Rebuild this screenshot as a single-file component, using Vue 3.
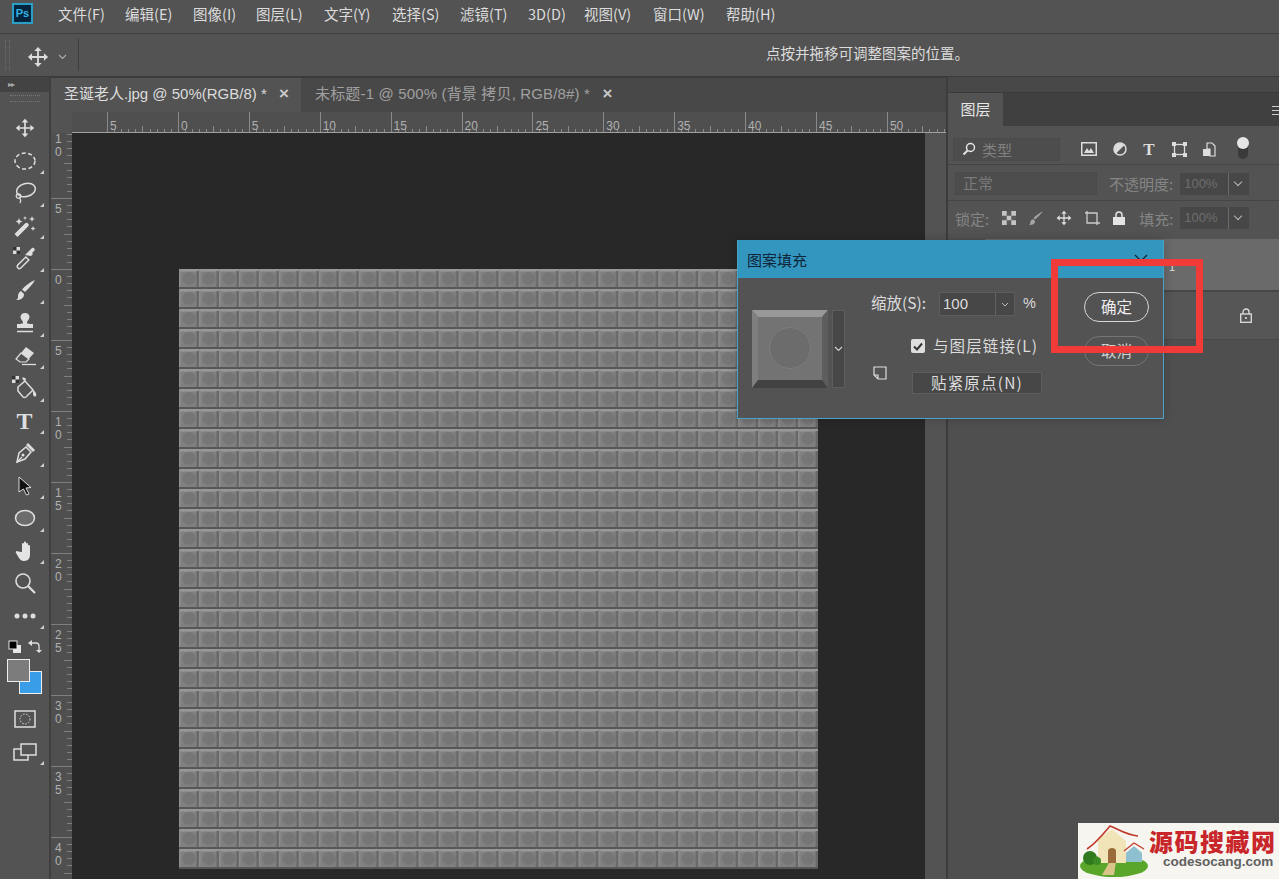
<script setup>
// Photoshop window with the pattern fill dialog open over the canvas.
const menus = [
  ['文件(F)', 67], ['编辑(E)', 68], ['图像(I)', 63], ['图层(L)', 68], ['文字(Y)', 68], ['选择(S)', 68],
  ['滤镜(T)', 68], ['3D(D)', 56], ['视图(V)', 69], ['窗口(W)', 73], ['帮助(H)', 60],
];

const STEP = 70.9;
// top ruler: first labelled tick sits 35px into the canvas area
const topLabels = ['5', '0', '5', '10', '15', '20', '25', '30', '35', '40', '45', '50'].map((t, i) => ({
  t,
  x: 35 + i * STEP,
}));
const topTicks = [];
for (let i = 0; i < 120; i++) {
  const h = i % 10 === 0 ? 21 : i % 5 === 0 ? 7 : 4;
  topTicks.push({ x: Math.round(35 + i * 7.09) + 0.5, h });
}
const leftLabels = ['5', '0', '5', '10', '15', '20', '25', '30', '35', '40'].map((t, i) => ({
  d: t.split(''),
  y: 68 + i * 71,
}));
const leftTicks = [];
for (let i = 0; i < 110; i++) {
  const w = i % 10 === 0 ? 21 : i % 5 === 0 ? 8 : 5;
  leftTicks.push({ y: Math.round(-6 + i * 7.1) + 0.5, w });
}
</script>

<template>
  <div class="ps">
    <!-- menu bar -->
    <header class="menubar">
      <div class="logo">Ps</div>
      <nav class="menus">
        <span v-for="m in menus" :key="m[0]" class="menu" :style="{ width: m[1] + 'px' }">{{ m[0] }}</span>
      </nav>
    </header>

    <!-- options bar -->
    <div class="options">
      <div class="grip"></div>
      <svg class="opt-move" width="22" height="22" viewBox="0 0 24 24"><path fill="#dcdcdc" d="M12 1l4 4.500h-3V11h5.500V8l4.500 4-4.500 4v-3H13v5.500h3L12 23l-4-4.500h3V13H5.500v3L1 12l4.500-4v3H11V5.500H8z"/></svg>
      <svg class="chev" width="9" height="6" viewBox="0 0 9 6"><path d="M1 1l3.500 3.500L8 1" fill="none" stroke="#aaa" stroke-width="1.200"/></svg>
      <div class="opt-div"></div>
      <div class="opt-hint">点按并拖移可调整图案的位置。</div>
    </div>

    <div class="work">
      <!-- tools -->
      <aside class="toolbar">
        <div class="collapse">▸▸</div>
        <div class="tool-grip"></div>
        <div class="tools">
          <div class="tool"><svg width="20" height="20" viewBox="0 0 24 24"><path fill="#dedede" d="M12 1l4 4.500h-3V11h5.500V8l4.500 4-4.500 4v-3H13v5.500h3L12 23l-4-4.500h3V13H5.500v3L1 12l4.500-4v3H11V5.500H8z"/></svg></div>
          <div class="tool more"><svg width="22" height="20" viewBox="0 0 22 20"><ellipse cx="11" cy="10" rx="10" ry="8" fill="none" stroke="#dedede" stroke-width="1.500" stroke-dasharray="4 2.500"/></svg></div>
          <div class="tool more"><svg width="22" height="24" viewBox="0 0 22 24"><ellipse cx="12" cy="9" rx="9.500" ry="6.500" transform="rotate(-15 12 9)" fill="none" stroke="#dedede" stroke-width="1.500"/><circle cx="4.500" cy="15" r="2.200" fill="none" stroke="#dedede" stroke-width="1.300"/><path d="M5 17c2 1 2 3 1 5" fill="none" stroke="#dedede" stroke-width="1.300"/></svg></div>
          <div class="tool more"><svg width="24" height="24" viewBox="0 0 24 24"><path d="M4.500 23L1.500 20 12 9.500c1-1 2-1 3 0s1 2 0 3z" fill="#dedede"/><path d="M6 4l1 2.500L9.500 7.500 7 8.500 6 11 5 8.500 2.500 7.500 5 6.500zM19 2l.8 2.200L22 5l-2.200.8L19 8l-.8-2.200L16 5l2.200-.8zM20 12l.7 1.800 1.800.7-1.800.7L20 17l-.7-1.800-1.800-.7 1.800-.7zM12 2l.6 1.400L14 4l-1.400.6L12 6l-.6-1.400L10 4l1.400-.6z" fill="#dedede"/></svg></div>
          <div class="tool more"><svg width="26" height="24" viewBox="0 0 26 24"><rect x="1" y="1" width="7" height="7" fill="#ddd"/><path d="M1 1h3.500v3.500H1zM4.500 4.500H8V8H4.500z" fill="#333"/><path d="M6 22c-1-1-1-2-.2-3l8-8 3 3-8 8c-1 .8-2 1-2.800 0z" fill="none" stroke="#dedede" stroke-width="1.500"/><path d="M13 9l7-7c1.500-1 3.500 1 2.500 2.500l-2.500 2.500 1 1-2 2-6-1z" fill="#dedede"/></svg></div>
          <div class="tool more"><svg width="22" height="24" viewBox="0 0 22 24"><path d="M21 1c-2 4-6 8-10 12l-3-2.500C11 7 16 3 21 1z" fill="#dedede"/><path d="M7 12l3 3c0 4-3 6-8 6 2-1 2-2 2-4 0-2 1-4 3-5z" fill="#dedede"/></svg></div>
          <div class="tool more"><svg width="20" height="22" viewBox="0 0 20 22"><path d="M10 1c3 0 4.500 2 4.500 4 0 2.500-2.500 3.500-2.500 5.500 0 1 1 1.500 6 1.500v4H2v-4c5 0 6-.5 6-1.500 0-2-2.500-3-2.500-5.500C5.500 3 7 1 10 1z" fill="#dedede"/><path d="M2 19.500h16" stroke="#dedede" stroke-width="1.500"/></svg></div>
          <div class="tool more"><svg width="24" height="20" viewBox="0 0 24 20"><path d="M13 1l8 6-8 9H7l-4-3z" fill="#dedede"/><path d="M3 13l5-6 8 6-3 3H7z" fill="#535353" stroke="#dedede" stroke-width="1.200"/><path d="M9 18.500h14" stroke="#dedede" stroke-width="1.300"/></svg></div>
          <div class="tool more"><svg width="28" height="26" viewBox="0 0 28 26"><rect x="1" y="1" width="7" height="7" fill="#ddd"/><path d="M1 1h3.500v3.500H1zM4.500 4.500H8V8H4.500z" fill="#333"/><path d="M7 12l7-6 8 9-7 7c-1 .7-2 .7-3 0l-5-6z" fill="none" stroke="#dedede" stroke-width="1.500"/><path d="M11 3c2-1 4 0 4 2l-2 1z" fill="#dedede"/><path d="M22 15c2 1 4 4 3 6-1 1.500-3 0-3-2z" fill="#dedede"/></svg></div>
          <div class="tool more type">T</div>
          <div class="tool more"><svg width="22" height="22" viewBox="0 0 22 22"><path d="M3 20l2-9 7-6 5 5-6 7z" fill="none" stroke="#dedede" stroke-width="1.500"/><path d="M12 3l2-2 7 7-2 2z" fill="#dedede"/><path d="M3 20l5-5" stroke="#dedede" stroke-width="1.200"/><circle cx="9" cy="13" r="1.500" fill="#dedede"/></svg></div>
          <div class="tool more"><svg width="16" height="20" viewBox="0 0 16 20"><path d="M2 1l12 10.500-5 .5 3 6-2.500 1-3-6L2 16z" fill="#111" stroke="#dedede" stroke-width="1"/></svg></div>
          <div class="tool more"><svg width="22" height="18" viewBox="0 0 22 18"><ellipse cx="11" cy="9" rx="9.500" ry="7.500" fill="#6c6c6c" stroke="#dedede" stroke-width="1.500"/></svg></div>
          <div class="tool more"><svg width="20" height="22" viewBox="0 0 20 22"><path d="M7 12V4c0-1.500 2-1.500 2 0V2.500c0-1.500 2-1.500 2 0V4c0-1.500 2-1.500 2 0v2c0-1.500 2-1.500 2 0v9c0 3-2 6-6 6-3 0-4-2-5-3L1 13c-1-1.500 1-2.500 2-1.500z" fill="#e4e4e4"/></svg></div>
          <div class="tool"><svg width="22" height="22" viewBox="0 0 22 22"><circle cx="9" cy="9" r="7" fill="none" stroke="#dedede" stroke-width="1.600"/><path d="M14 14l7 7" stroke="#dedede" stroke-width="2.200"/></svg></div>
          <div class="tool more"><svg width="22" height="6" viewBox="0 0 22 6"><circle cx="3" cy="3" r="2.500" fill="#dedede"/><circle cx="11" cy="3" r="2.500" fill="#dedede"/><circle cx="19" cy="3" r="2.500" fill="#dedede"/></svg></div>
        </div>
        <div class="mini-colors">
          <svg width="14" height="14" viewBox="0 0 14 14"><rect x="5" y="5" width="8" height="8" fill="#e6e6e6"/><rect x="1" y="1" width="8" height="8" fill="#000" stroke="#e6e6e6"/></svg>
          <svg width="14" height="14" viewBox="0 0 14 14"><path d="M1 3h7a3 3 0 0 1 3 3v5" fill="none" stroke="#dedede" stroke-width="1.300"/><path d="M4 0v6L0 3zM8 10h6l-3 3z" fill="#dedede"/></svg>
        </div>
        <div class="swatches">
          <div class="sw-bg"></div>
          <div class="sw-fg"></div>
        </div>
        <div class="tool mask"><svg width="22" height="18" viewBox="0 0 22 18"><rect x="1" y="1" width="20" height="16" fill="none" stroke="#dedede" stroke-width="1.500"/><circle cx="11" cy="9" r="5" fill="none" stroke="#dedede" stroke-dasharray="1.500 1.500"/></svg></div>
        <div class="tool more"><svg width="24" height="18" viewBox="0 0 24 18"><rect x="1" y="6" width="14" height="11" fill="none" stroke="#dedede" stroke-width="1.500"/><rect x="8" y="1" width="15" height="11" fill="#535353" stroke="#dedede" stroke-width="1.500"/></svg></div>
      </aside>

      <!-- document -->
      <main class="doc">
        <div class="tabs">
          <div class="tab active">圣诞老人.jpg @ 50%(RGB/8) * <span class="x">×</span></div>
          <div class="tab second">未标题-1 @ 500% (背景 拷贝, RGB/8#) * <span class="x">×</span></div>
        </div>
        <div class="viewport">
          <svg class="ruler-top" width="874" height="21">
            <rect width="874" height="21" fill="#4f4f4f"/>
            <path v-for="k in topTicks" :key="k.x" :d="`M${k.x} ${21 - k.h}V21`" stroke="#8a8a8a"/>
            <text v-for="l in topLabels" :key="l.x" :x="l.x + 3" y="18" class="rt">{{ l.t }}</text>
            <path d="M0 20.500H874" stroke="#a0a0a0"/>
          </svg>
          <div class="view-row">
            <svg class="ruler-left" width="21" height="746">
              <rect width="21" height="746" fill="#4f4f4f"/>
              <path v-for="k in leftTicks" :key="k.y" :d="`M${21 - k.w} ${k.y}H21`" stroke="#7e7e7e"/>
              <g v-for="l in leftLabels" :key="l.y">
                <text v-for="(c, i) in l.d" :key="i" x="4" :y="l.y + 12 + i * 13" class="rt">{{ c }}</text>
              </g>
              <text x="4" y="10" class="rt">1</text>
              <text x="4" y="23" class="rt">0</text>
            </svg>
            <div class="canvas">
              <svg class="pattern" width="639" height="600">
                <defs>
                  <pattern id="tile" width="19.970" height="20" patternUnits="userSpaceOnUse">
                    <rect width="20" height="20" fill="#808080"/>
                    <circle cx="10" cy="9.500" r="6.500" fill="#767676"/>
                    <path d="M0 0h20v2.500H0z" fill="#989898"/>
                    <path d="M0 0h1.500v18H0z" fill="#8e8e8e"/>
                    <path d="M17.500 2h2.500v16h-2.500z" fill="#686868"/>
                    <path d="M0 18h20v2H0z" fill="#575757"/>
                  </pattern>
                </defs>
                <rect width="639" height="600" fill="url(#tile)"/>
              </svg>
            </div>
            <div class="vscroll"></div>
          </div>
        </div>
      </main>

      <!-- layers panel -->
      <aside class="panel">
        <div class="panel-tabs">
          <div class="panel-tab">图层</div>
          <div class="panel-menu"></div>
        </div>
        <div class="p-row filter">
          <div class="select kind">
            <svg width="14" height="14" viewBox="0 0 14 14"><circle cx="8.500" cy="5.500" r="4" fill="none" stroke="#e4e4e4" stroke-width="1.500"/><path d="M5.500 8.500L1.500 12.500" stroke="#e4e4e4" stroke-width="2"/></svg>
            <span>类型</span>
          </div>
          <div class="filter-icons">
            <svg width="16" height="14" viewBox="0 0 16 14"><rect x=".75" y=".75" width="14.500" height="12.500" fill="none" stroke="#ddd" stroke-width="1.500"/><path d="M3 11l3-5 2 3 2-3 3 5z" fill="#ddd"/></svg>
            <svg width="14" height="14" viewBox="0 0 14 14"><circle cx="7" cy="7" r="6" fill="none" stroke="#ddd" stroke-width="1.500"/><path d="M11.500 3L3 11.500A6 6 0 0 1 11.500 3z" fill="#ddd"/></svg>
            <span class="t-icon">T</span>
            <svg width="15" height="15" viewBox="0 0 15 15"><rect x="2.500" y="2.500" width="10" height="10" fill="none" stroke="#ddd" stroke-width="1.300"/><path d="M0 0h4v4H0zM11 0h4v4h-4zM0 11h4v4H0zM11 11h4v4h-4z" fill="#ddd"/></svg>
            <svg width="14" height="15" viewBox="0 0 14 15"><path d="M5 1h5l3 3v10H8V7H5z" fill="none" stroke="#ddd" stroke-width="1.200"/><rect x="1" y="7" width="7" height="7" fill="#ddd"/></svg>
            <div class="toggle"></div>
          </div>
        </div>
        <div class="p-row blend">
          <div class="select mode">正常</div>
          <span class="dim">不透明度:</span>
          <div class="num">100%<i></i></div>
        </div>
        <div class="p-row locks">
          <span class="dim">锁定:</span>
          <div class="lock-icons">
            <svg width="14" height="14" viewBox="0 0 14 14"><rect width="14" height="14" fill="#5a5a5a"/><path d="M0 0h4.700v4.700H0zM9.300 0H14v4.700H9.300zM4.700 4.700h4.600v4.600H4.700zM0 9.300h4.700V14H0zM9.300 9.300H14V14H9.300z" fill="#c4c4c4"/></svg>
            <svg width="16" height="16" viewBox="0 0 16 16"><path d="M15 1c-2 3-5 6-8 8.500L5.500 8C8 5.500 12 2.500 15 1zM5 9l2 2c0 3-2 4-6 4 1.500-1 1-2 1.500-3.500C3 10 4 9.500 5 9z" fill="#a5a5a5"/></svg>
            <svg width="16" height="16" viewBox="0 0 24 24"><path fill="#ddd" d="M12 1l4 4.500h-3V11h5.500V8l4.500 4-4.500 4v-3H13v5.500h3L12 23l-4-4.500h3V13H5.500v3L1 12l4.500-4v3H11V5.500H8z"/></svg>
            <svg width="17" height="16" viewBox="0 0 17 16"><path d="M3 1v12h13M1 3h12v12" fill="none" stroke="#ccc" stroke-width="1.300"/></svg>
            <svg width="12" height="14" viewBox="0 0 12 14"><path d="M3 6V4a3 3 0 0 1 6 0v2" fill="none" stroke="#e4e4e4" stroke-width="1.500"/><rect y="6" width="12" height="8" fill="#e4e4e4"/></svg>
          </div>
          <span class="dim fill">填充:</span>
          <div class="num">100%<i></i></div>
        </div>
        <div class="layers">
          <div class="layer on"><span>1</span></div>
          <div class="layer plain">
            <svg width="12" height="15" viewBox="0 0 12 15"><path d="M3 6V4a3 3 0 0 1 6 0v2" fill="none" stroke="#ddd" stroke-width="1.300"/><rect x=".7" y="6" width="10.600" height="8.300" fill="none" stroke="#ddd" stroke-width="1.300"/><circle cx="6" cy="10" r="1.100" fill="#ddd"/></svg>
          </div>
        </div>
      </aside>
    </div>

    <!-- pattern fill dialog -->
    <section class="dialog">
      <div class="d-title">图案填充<svg width="14" height="10" viewBox="0 0 14 10"><path d="M1 1l6 6 6-6" fill="none" stroke="#123" stroke-width="1.200"/></svg></div>
      <div class="d-body">
        <div class="d-preview">
          <svg width="76" height="78" viewBox="0 0 76 78">
            <rect width="76" height="78" fill="#737373"/>
            <path d="M0 0h76l-6 7H6z" fill="#989898"/>
            <path d="M0 0l6 7v64l-6 7z" fill="#7f7f7f"/>
            <path d="M76 0l-6 7v64l6 7z" fill="#5d5d5d"/>
            <path d="M0 78l6-8h64l6 8z" fill="#424242"/>
            <circle cx="38" cy="38" r="21" fill="#6c6c6c"/>
            <circle cx="38" cy="38" r="20.500" fill="none" stroke="#7d7d7d"/>
          </svg>
          <div class="d-drop"><svg width="9" height="6" viewBox="0 0 9 6"><path d="M1 1l3.500 3.500L8 1" fill="none" stroke="#ccc" stroke-width="1.200"/></svg></div>
        </div>
        <div class="d-mid">
          <div class="d-scale">
            <span class="d-label">缩放(S):</span>
            <div class="d-input"><span>100</span><i><svg width="8" height="5" viewBox="0 0 8 5"><path d="M1 1l3 3 3-3" fill="none" stroke="#bbb"/></svg></i></div>
            <span class="pct">%</span>
          </div>
          <div class="d-link">
            <div class="d-note"><svg width="14" height="14" viewBox="0 0 14 14"><path d="M1 1h12v12H5L1 9zM1 9h4v4" fill="none" stroke="#ddd" stroke-width="1.200"/></svg></div>
            <div class="d-linkcol">
              <label class="d-check"><i><svg width="10" height="9" viewBox="0 0 10 9"><path d="M1 4.500l3 3 5-6" fill="none" stroke="#333" stroke-width="2"/></svg></i><span>与图层链接(L)</span></label>
              <div class="d-snap">贴紧原点(N)</div>
            </div>
          </div>
        </div>
        <div class="d-btns">
          <div class="pill">确定</div>
          <div class="pill off">取消</div>
        </div>
      </div>
    </section>

    <!-- annotation + watermark pasted on top of the capture -->
    <div class="redbox"></div>
    <div class="watermark">
      <svg width="72" height="56" viewBox="0 0 72 56">
        <ellipse cx="36" cy="43" rx="34" ry="11" fill="#5aa62a"/>
        <path d="M24 52l8-14h6l-2 14z" fill="#d9c48a"/>
        <path d="M20 16L34 6l14 12v22H20z" fill="#f0e4b8"/>
        <path d="M30 40V28c0-4 8-4 8 0v12z" fill="#9a6a3a"/>
        <path d="M9 26C18 20 26 10 32 3c8 3 16 9 28 10" fill="none" stroke="#c0392b" stroke-width="1.600"/>
        <path d="M48 30l8-7 8 7v9H48z" fill="#8fc0d0"/>
        <path d="M46 28l10-8 10 6" fill="none" stroke="#c0392b" stroke-width="1.200"/>
        <circle cx="12" cy="35" r="7" fill="#2f7a1e"/>
        <circle cx="19" cy="38" r="4" fill="#3b8a24"/>
      </svg>
      <div class="wm-text">
        <div class="wm-cn">源码搜藏网</div>
        <div class="wm-en">codesocang.com</div>
      </div>
    </div>
  </div>
</template>

<style>
html, body { margin: 0; background: #535353; }
</style>

<style scoped>
.ps {
  position: relative; width: 1279px; height: 879px; overflow: hidden; background: #535353;
  font-family: "Noto Sans CJK SC", "Liberation Sans", sans-serif; color: #dcdcdc;
  display: flex; flex-direction: column;
}
.menubar { height: 33px; flex: none; display: flex; align-items: center; padding-left: 12px; border-bottom: 1px solid #3f3f3f; }
.logo {
  width: 17px; height: 17px; border: 2px solid #2a9ec4; background: #04233c; color: #35b4e6;
  font: bold 11px/17px "Liberation Sans", sans-serif; text-align: center; margin-bottom: 6px;
}
.menus { display: flex; margin-left: 25px; margin-bottom: 6px; }
.menu { font-size: 14.500px; white-space: nowrap; }

.options { height: 42px; flex: none; display: flex; align-items: center; border-bottom: 1px solid #3a3a3a; }
.grip { width: 3px; height: 30px; margin-left: 5px; border-left: 1px dotted #6e6e6e; border-right: 1px dotted #6e6e6e; }
.opt-move { margin-left: 17px; margin-top: 4px; }
.chev { margin-left: 9px; margin-top: 3px; }
.opt-div { width: 1px; height: 32px; background: #3d3d3d; margin-left: 11px; }
.opt-hint { margin-left: 687px; font-size: 14.500px; margin-bottom: 6px; }

.work { flex: 1; min-height: 0; display: flex; }

.toolbar { width: 49px; flex: none; border-right: 2px solid #3f3f3f; display: flex; flex-direction: column; align-items: center; }
.collapse { align-self: stretch; height: 15px; background: #434343; color: #aaa; font-size: 8px; line-height: 14px; padding-left: 8px; letter-spacing: -1px; }
.tool-grip { width: 30px; height: 5px; margin-top: 3px; border-top: 1px dotted #777; border-bottom: 1px dotted #777; }
.tools { margin-top: 10px; display: flex; flex-direction: column; }
.tool { position: relative; width: 38px; height: 32.500px; display: flex; align-items: center; justify-content: center; }
.more::after {
  content: ""; position: absolute; right: 0; bottom: 3px; width: 0; height: 0;
  border-left: 4px solid transparent; border-bottom: 4px solid #cfcfcf;
}
.type { font: 700 24px/1 "Liberation Serif", serif; color: #dedede; }
.mini-colors { width: 34px; display: flex; justify-content: space-between; margin-top: 8px; }
.swatches { position: relative; width: 36px; height: 36px; margin-top: 5px; }
.sw-fg, .sw-bg { position: absolute; width: 21px; height: 21px; border: 1px solid #eee; }
.sw-fg { left: 0; top: 0; background: #7c7c7c; }
.sw-bg { left: 12px; top: 12px; background: #3a9de8; }
.mask { margin-top: 8px; }

.doc { width: 895px; flex: none; display: flex; flex-direction: column; }
.tabs { height: 35px; flex: none; background: #484848; display: flex; border-top: 1px solid #3c3c3c; box-sizing: border-box; }
.tab { height: 34px; line-height: 32px; font-size: 15px; padding: 0 14px; color: #a0a0a0; white-space: pre; font-family: "Liberation Sans", "Noto Sans CJK SC", sans-serif; }
.tab.active { background: #535353; color: #dcdcdc; width: 250px; box-sizing: border-box; padding-left: 13px; }
.tab.second { letter-spacing: .16px; }
.x { margin-left: 8px; font-size: 17px; font-weight: 700; color: #c8c8c8; }
.viewport { flex: 1; min-height: 0; display: flex; flex-direction: column; overflow: hidden; }
.ruler-top, .ruler-left { display: block; flex: none; }
.ruler-top { margin-left: 21px; }
.rt { font: 12px "Liberation Sans", sans-serif; fill: #b0b0b0; }
.view-row { flex: 1; min-height: 0; display: flex; }
.canvas { width: 853px; flex: none; background: #282828; padding: 136px 0 0 107px; box-sizing: border-box; }
.pattern { display: block; filter: blur(.35px); }
.vscroll { width: 21px; flex: none; background: #535353; }

.panel { flex: 1; min-width: 0; border-left: 2px solid #3c3c3c; display: flex; flex-direction: column; font-size: 15px; }
.panel-tabs { height: 49px; flex: none; display: flex; padding-top: 15px; box-sizing: border-box; background: #484848; }
.panel-tab { width: 55px; background: #535353; border-top: 1px solid #3a3a3a; text-align: center; line-height: 32px; color: #e6e6e6; }
.panel-menu { flex: 1; background: #404040; border-top: 1px solid #3a3a3a; position: relative; }
.panel-menu::after { content: ""; position: absolute; right: 0; top: 13px; width: 7px; height: 7px; border-top: 1px solid #ccc; border-bottom: 1px solid #ccc; background: linear-gradient(#ccc, #ccc) center/100% 1px no-repeat; }
.p-row { display: flex; align-items: center; flex: none; box-sizing: border-box; }
.select { background: #4d4d4d; border: 1px solid #4a4a4a; box-sizing: border-box; color: #808080; }
.filter { height: 39px; padding: 8px 0 0 5px; border-bottom: 1px solid #454545; }
.kind { width: 107px; height: 23px; display: flex; align-items: center; gap: 6px; padding-left: 8px; }
.filter-icons { display: flex; align-items: center; margin-left: 21px; }
.filter-icons > * { margin-right: 15.500px; }
.t-icon { font: 700 17px/1 "Liberation Serif", serif; color: #ddd; width: 14px; text-align: center; }
.toggle { width: 10px; height: 20px; border-radius: 5px; background: #3a3a3a; position: relative; margin-left: 6px; }
.toggle::before { content: ""; position: absolute; left: -1px; top: -2px; width: 12px; height: 12px; border-radius: 50%; background: #e6e6e6; }
.blend { height: 36px; padding: 2px 0 0 7px; border-bottom: 1px solid #454545; }
.mode { width: 142px; height: 23px; line-height: 20px; padding-left: 7px; color: #7a7a7a; margin-right: 12px; }
.dim { color: #858585; white-space: nowrap; }
.num { width: 69px; height: 22px; box-sizing: border-box; margin-left: 7px; background: #474747; color: #6e6e6e; font: 13px/22px "Liberation Sans", sans-serif; padding-left: 4px; position: relative; }
.num i { position: absolute; right: 0; top: 0; bottom: 0; width: 20px; border-left: 1px solid #6a6a6a; }
.num i::after { content: ""; position: absolute; left: 6px; top: 6px; width: 5px; height: 5px; border-right: 1.500px solid #bbb; border-bottom: 1.500px solid #bbb; transform: rotate(45deg); }
.locks { height: 34px; padding-left: 7px; }
.lock-icons { display: flex; align-items: center; gap: 12px; margin-left: 13px; }
.fill { margin-left: 14px; }
.layers { margin-top: 4px; flex: 1; background: #4f4f4f; }
.layer.on { height: 51px; background: #6a6a6a; margin-left: 37px; border-bottom: 2px solid #474747; padding-left: 184px; font: 11px/56px "Liberation Sans", sans-serif; color: #e0e0e0; }
.layer.plain { height: 47px; background: #565656; display: flex; align-items: center; justify-content: flex-end; padding-right: 27px; border-bottom: 1px solid #474747; }

.dialog {
  position: absolute; left: 737px; top: 240px; width: 427px; height: 179px; box-sizing: border-box;
  background: #535353; border: 1px solid #4aa3c4; border-top: 0; display: flex; flex-direction: column;
  box-shadow: 0 0 10px rgba(0, 0, 0, .2);
}
.d-title { height: 38px; flex: none; background: #3296bf; color: #10243a; font-size: 15px; display: flex; align-items: center; justify-content: space-between; padding: 0 15px 0 9px; }
.d-body { flex: 1; display: flex; padding: 14px 14px 0 14px; font-size: 15.500px; }
.d-preview { display: flex; gap: 4px; margin-top: 18px; align-self: flex-start; }
.d-preview svg { display: block; }
.d-drop { width: 13px; height: 78px; background: #474747; border: 1px solid #5d5d5d; box-sizing: border-box; display: flex; align-items: center; justify-content: center; }
.d-mid { width: 197px; margin-left: 26px; }
.d-scale { display: flex; align-items: center; height: 24px; white-space: nowrap; }
.d-label { width: 68px; margin-bottom: 4px; }
.d-input { width: 76px; height: 24px; box-sizing: border-box; background: #474747; border: 1px solid #5d5d5d; display: flex; font: 15px/22px "Liberation Sans", sans-serif; padding-left: 3px; }
.d-input span { flex: 1; }
.d-input i { width: 18px; border-left: 1px solid #616161; display: flex; align-items: center; justify-content: center; }
.pct { font: 14.500px "Liberation Sans", sans-serif; margin-left: 8px; margin-bottom: 3px; }
.d-link { display: flex; margin-top: 18px; }
.d-note { width: 40px; padding: 28px 0 0 2px; box-sizing: border-box; }
.d-linkcol { display: flex; flex-direction: column; gap: 14px; }
.d-check { display: flex; align-items: center; gap: 8px; height: 24px; letter-spacing: 1.100px; white-space: nowrap; }
.d-check span { margin-bottom: 2px; }
.d-check i { width: 14px; height: 14px; border-radius: 2px; background: #dedede; display: flex; align-items: center; justify-content: center; }
.d-snap { width: 130px; height: 22px; box-sizing: border-box; background: #474747; border: 1px solid #5d5d5d; text-align: center; line-height: 18px; letter-spacing: 1.200px; margin-left: 1px; white-space: nowrap; }
.d-btns { margin-left: auto; display: flex; flex-direction: column; gap: 14px; }
.pill { width: 65px; height: 30px; box-sizing: border-box; border: 1px solid #d8d8d8; border-radius: 15px; text-align: center; line-height: 26px; color: #eee; }
.pill.off { border-color: #757575; color: #d0d0d0; }

.redbox { position: absolute; left: 1051px; top: 259px; width: 152px; height: 94px; box-sizing: border-box; border: 7px solid #f03b38; }

.watermark { position: absolute; left: 1078px; top: 823px; width: 201px; height: 56px; background: #f6f5ef; display: flex; }
.wm-text { padding-top: 5px; }
.wm-cn { color: #c8262a; font-size: 24px; font-weight: 900; line-height: 26px; letter-spacing: 1.500px; white-space: nowrap; margin-left: -1px; }
.wm-en { color: #606060; font: bold 13.500px/15px "Liberation Sans", sans-serif; margin-left: 13px; white-space: nowrap; }
</style>
